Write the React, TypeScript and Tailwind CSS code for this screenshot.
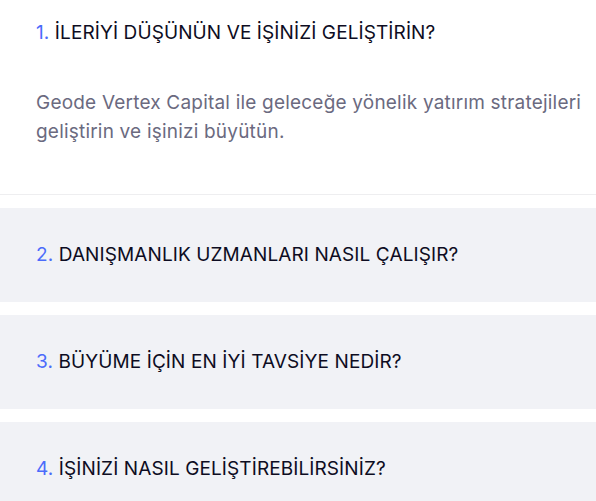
import { useState } from "react";

interface FaqItem {
  id: number;
  question: string;
  answer: string;
}

const faqs: FaqItem[] = [
  {
    id: 1,
    question: "İLERİYİ DÜŞÜNÜN VE İŞİNİZİ GELİŞTİRİN?",
    answer:
      "Geode Vertex Capital ile geleceğe yönelik yatırım stratejileri geliştirin ve işinizi büyütün.",
  },
  { id: 2, question: "DANIŞMANLIK UZMANLARI NASIL ÇALIŞIR?", answer: "" },
  { id: 3, question: "BÜYÜME İÇİN EN İYİ TAVSİYE NEDİR?", answer: "" },
  { id: 4, question: "İŞİNİZİ NASIL GELİŞTİREBİLİRSİNİZ?", answer: "" },
];

export default function App() {
  const [openId, setOpenId] = useState(1);

  return (
    <div
      className="w-[596px] h-[501px] overflow-hidden bg-white flex flex-col gap-[13px]"
      style={{ fontFamily: "Inter, 'Noto Sans', sans-serif" }}
    >
      {faqs.map((faq) => {
        const open = openId === faq.id;
        return open ? (
          <div key={faq.id} className="border-b border-[#eeeef0] pt-[19px] pb-[48px] pl-9 pr-2">
            <button
              className="block text-left text-[19px] leading-[28px] tracking-[0.1px] text-[#0d0c22]"
              onClick={() => setOpenId(0)}
            >
              <span className="text-[#4b6bfb]">{faq.id}.</span> {faq.question}
            </button>
            <p className="mt-[41px] text-[19px] leading-[29px] tracking-[0.2px] text-[#6b6a7f]">
              {faq.answer}
            </p>
          </div>
        ) : (
          <button
            key={faq.id}
            className="h-[94px] shrink-0 bg-[#f1f2f6] px-9 flex items-center text-left text-[19px] leading-[28px] tracking-[0.1px] text-[#0d0c22]"
            onClick={() => setOpenId(faq.id)}
          >
            <span>
              <span className="text-[#4b6bfb]">{faq.id}.</span> {faq.question}
            </span>
          </button>
        );
      })}
    </div>
  );
}
